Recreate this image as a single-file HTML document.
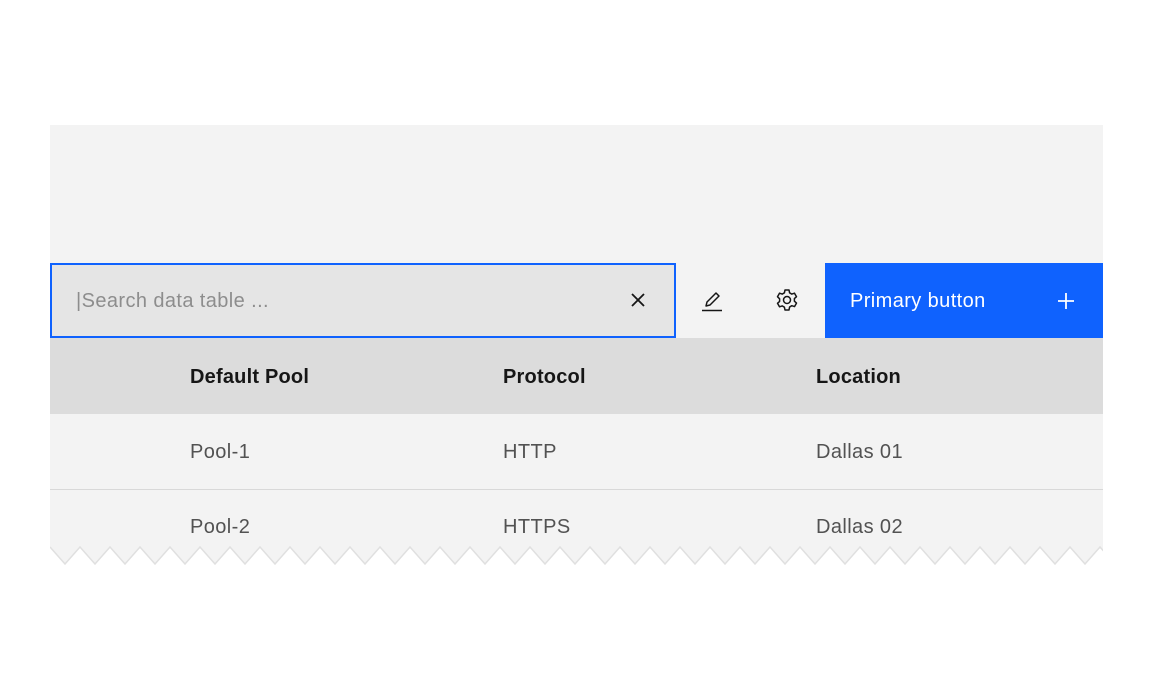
<!DOCTYPE html>
<html><head><style>
body{margin:0;width:1152px;height:689px;background:#fff;position:relative;font-family:"Liberation Sans",sans-serif;overflow:hidden}
.a{position:absolute}
.t{font-size:20px;color:#525252;letter-spacing:0.4px}
.h{font-size:20px;color:#161616;font-weight:bold;letter-spacing:0.2px}
</style></head><body>
<div class="a" style="left:50px;top:125px;width:1053px;height:423px;background:#f3f3f3"></div>
<div class="a" style="left:50px;top:263px;width:622px;height:71px;border:2px solid #0f62fe;background:#e5e5e5"></div>
<div class="a" style="left:76px;top:290px;font-size:20px;color:#8d8d8d;letter-spacing:0.4px">|Search data table ...</div>
<svg class="a" style="left:628px;top:290px" width="20" height="20" viewBox="0 0 20 20"><path d="M4 4L16 16M16 4L4 16" stroke="#161616" stroke-width="1.8"/></svg>
<svg class="a" style="left:700px;top:288px" width="24" height="24" viewBox="0 0 24 24"><path d="M2 22.5H22" stroke="#161616" stroke-width="1.6"/><path d="M6 18L7 14L16 5L19 8L10 17Z" fill="none" stroke="#161616" stroke-width="1.5" stroke-linejoin="round"/></svg>
<svg class="a" style="left:775px;top:288px" width="24" height="24" viewBox="0 0 24 24"><path d="M10 2h4l.6 2.8 2.2 1.3 2.7-.9 2 3.5-2.1 1.9v2.6l2.1 1.9-2 3.5-2.7-.9-2.2 1.3L14 22h-4l-.6-2.8-2.2-1.3-2.7.9-2-3.5 2.1-1.9v-2.6L2.5 8.7l2-3.5 2.7.9 2.2-1.3Z" fill="none" stroke="#161616" stroke-width="1.5" stroke-linejoin="round"/><circle cx="12" cy="12" r="3.5" fill="none" stroke="#161616" stroke-width="1.5"/></svg>
<div class="a" style="left:825px;top:263px;width:278px;height:75px;background:#0f62fe"></div>
<div class="a" style="left:850px;top:290px;font-size:20px;color:#fff;letter-spacing:0.4px">Primary button</div>
<svg class="a" style="left:1056px;top:291px" width="20" height="20" viewBox="0 0 20 20"><path d="M10 2V18M2 10H18" stroke="#fff" stroke-width="1.8"/></svg>
<div class="a" style="left:50px;top:338px;width:1053px;height:76px;background:#dcdcdc"></div>
<div class="a h" style="left:190px;top:366px">Default Pool</div>
<div class="a h" style="left:503px;top:366px">Protocol</div>
<div class="a h" style="left:816px;top:366px">Location</div>
<div class="a" style="left:50px;top:489px;width:1053px;height:1px;background:#d8d8d8"></div>
<div class="a t" style="left:190px;top:441px">Pool-1</div>
<div class="a t" style="left:503px;top:441px">HTTP</div>
<div class="a t" style="left:816px;top:441px">Dallas 01</div>
<div class="a t" style="left:190px;top:516px">Pool-2</div>
<div class="a t" style="left:503px;top:516px">HTTPS</div>
<div class="a t" style="left:816px;top:516px">Dallas 02</div>
<svg id="sv" class="a" style="left:50px;top:545px" width="1053" height="22">
<path id="z" d="" fill="#f3f3f3"/>
</svg>
<script>
var d="M0 2";
for(var x=0;x<=1060;x+=30){d+=" L"+(x+15)+" 19 L"+(x+30)+" 2";}
document.getElementById('z').setAttribute('d',d+" L1070 0 L0 0Z");
var s=document.createElementNS("http://www.w3.org/2000/svg","path");
s.setAttribute("d",d);s.setAttribute("fill","none");s.setAttribute("stroke","#e0e0e0");s.setAttribute("stroke-width","1.5");
document.getElementById('sv').appendChild(s);
</script>
</body></html>
